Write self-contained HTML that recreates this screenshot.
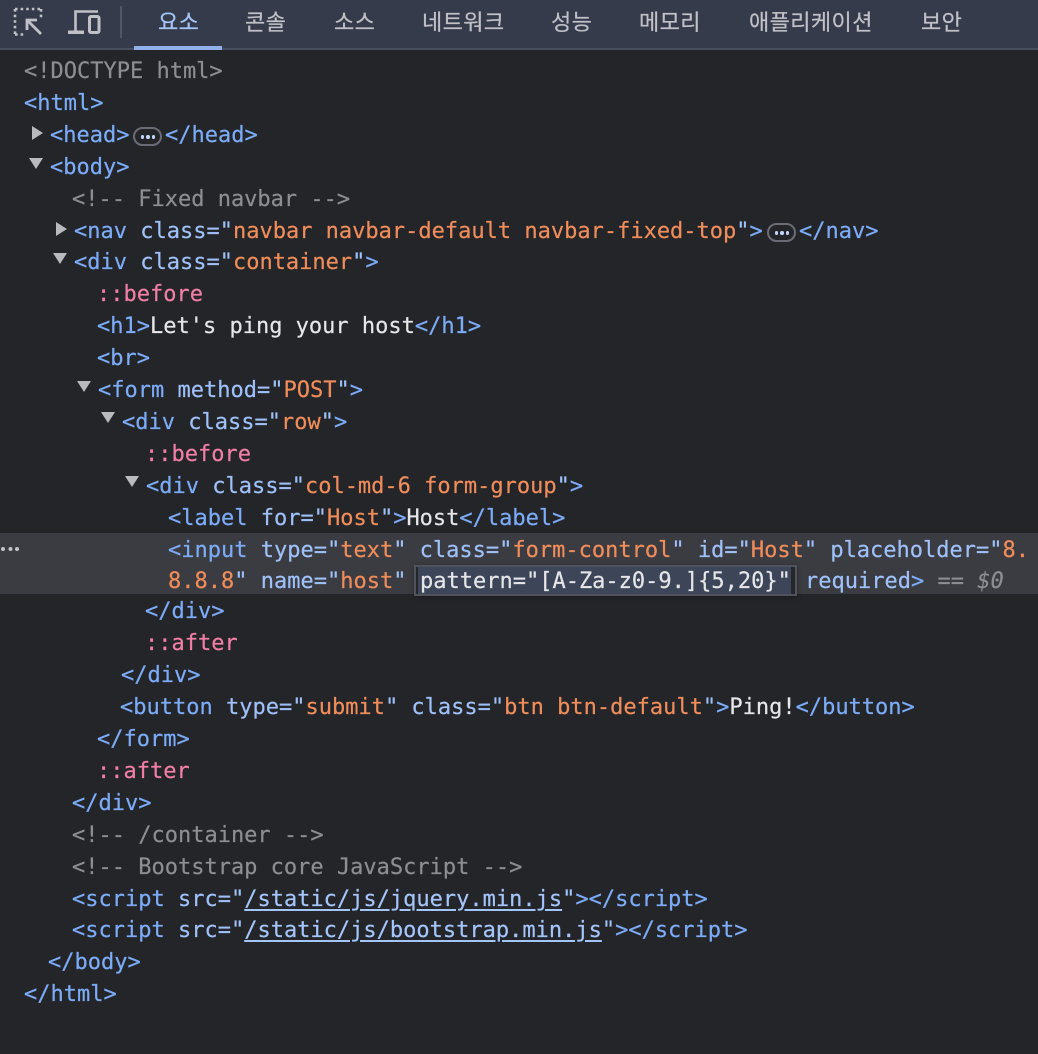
<!DOCTYPE html>
<html><head><meta charset="utf-8">
<style>
html,body{margin:0;padding:0;background:#242529;width:1038px;height:1054px;overflow:hidden}
#p{position:relative;width:1038px;height:1054px;overflow:hidden;font-family:"DejaVu Sans Mono","Liberation Mono",monospace;font-size:22px;-webkit-text-stroke:0.2px}
.l{position:absolute;white-space:pre;line-height:32px;height:32px;margin-top:2px;color:#e3e3e6}
.t{color:#7cacf8}.a{color:#9fc1f9}.v{color:#f08d5a}.c{color:#8d8e91}.p{color:#f27fa5}.w{color:#e6e6e9}
.u{color:#a4c5fa;text-decoration:underline;text-underline-offset:3px}
.tab{position:absolute;top:8px;line-height:30px;font-family:"Liberation Sans","Noto Sans CJK KR",sans-serif;font-size:22px;letter-spacing:.4px;color:#c0c1c6;white-space:pre}
.b{position:absolute;width:25px;height:15px;border:2px solid #6a6d75;border-radius:10px}
.b i{position:absolute;top:6px;width:3.5px;height:3.5px;border-radius:50%;background:#c3d6f8}
.tr{position:absolute;width:0;height:0}
.r{border-top:7.5px solid transparent;border-bottom:7.5px solid transparent;border-left:11px solid #b9babd}
.d{border-left:7.5px solid transparent;border-right:7.5px solid transparent;border-top:11px solid #b9babd}
</style></head><body>
<div id="p">
<div style="position:absolute;left:0;top:0;width:1038px;height:48px;background:#353b4b"></div>
<div style="position:absolute;left:0;top:48px;width:1038px;height:2px;background:#4a4f60"></div>
<div style="position:absolute;left:134px;top:46px;width:88px;height:4px;background:#8fb0ea"></div>
<svg style="position:absolute;left:0;top:0" width="130" height="48" fill="none">
<path d="M15 9h27M15 9v26M41 9v11M15 34.500h11" stroke="#c0c1c6" stroke-width="2.600" stroke-dasharray="2.600 3"/>
<path d="M41 34 L28 21 M27 30 V20 H37" stroke="#c0c1c6" stroke-width="2.800"/>
<path d="M75.500 31V11.500H98" stroke="#c0c1c6" stroke-width="2.600"/>
<path d="M68 30.500H84V34H68Z" fill="#c0c1c6"/>
<rect x="89.500" y="16.500" width="9.500" height="16" rx="1.500" stroke="#c0c1c6" stroke-width="3"/>
<rect x="120" y="6" width="2" height="32" fill="#51566a"/>
</svg>
<div class="tab" style="left:158px;color:#a6c6fa">요소</div>
<div class="tab" style="left:245px">콘솔</div>
<div class="tab" style="left:334px">소스</div>
<div class="tab" style="left:422px">네트워크</div>
<div class="tab" style="left:551px">성능</div>
<div class="tab" style="left:639px">메모리</div>
<div class="tab" style="left:749px">애플리케이션</div>
<div class="tab" style="left:921px">보안</div>

<div style="position:absolute;left:0;top:533px;width:1038px;height:61px;background:#3b3c41"></div>
<div style="position:absolute;left:414px;top:565px;width:383px;height:31px;background:#3c4658;box-sizing:border-box;border:2px solid #50535b;box-shadow:0 1px 5px rgba(0,0,0,.3)"></div>
<div style="position:absolute;left:416px;top:567px;width:2px;height:27px;background:#25262a"></div>
<div style="position:absolute;left:791px;top:567px;width:4px;height:27px;background:#25262a"></div>
<svg style="position:absolute;left:0;top:544px" width="22" height="10"><circle cx="3" cy="5" r="2" fill="#c3c4c7"/><circle cx="10.500" cy="5" r="2" fill="#c3c4c7"/><circle cx="17" cy="5" r="2" fill="#c3c4c7"/></svg>

<div class="tr r" style="left:32px;top:126px"></div>
<div class="tr d" style="left:29px;top:158px"></div>
<div class="tr r" style="left:56px;top:222px"></div>
<div class="tr d" style="left:53px;top:253px"></div>
<div class="tr d" style="left:77px;top:381px"></div>
<div class="tr d" style="left:101px;top:412px"></div>
<div class="tr d" style="left:125px;top:476px"></div>
<div class="b" style="left:133px;top:127px"><i style="left:5.500px"></i><i style="left:11px"></i><i style="left:16.500px"></i></div>
<div class="b" style="left:767px;top:223px"><i style="left:5.500px"></i><i style="left:11px"></i><i style="left:16.500px"></i></div>

<div class="l c" style="left:24px;top:54px">&lt;!DOCTYPE html&gt;</div>
<div class="l t" style="left:24px;top:86px">&lt;html&gt;</div>
<div class="l t" style="left:50px;top:118px">&lt;head&gt;</div>
<div class="l t" style="left:165px;top:118px">&lt;/head&gt;</div>
<div class="l t" style="left:50px;top:150px">&lt;body&gt;</div>
<div class="l c" style="left:72px;top:182px">&lt;!-- Fixed navbar --&gt;</div>
<div class="l t" style="left:74px;top:214px">&lt;nav <span class="a">class=</span><span class="a">"</span><span class="v">navbar navbar-default navbar-fixed-top</span><span class="a">"</span>&gt;</div>
<div class="l t" style="left:799px;top:214px">&lt;/nav&gt;</div>
<div class="l t" style="left:74px;top:245px">&lt;div <span class="a">class="</span><span class="v">container</span><span class="a">"</span>&gt;</div>
<div class="l p" style="left:97px;top:277px">::before</div>
<div class="l t" style="left:97px;top:309px">&lt;h1&gt;<span class="w">Let's ping your host</span>&lt;/h1&gt;</div>
<div class="l t" style="left:97px;top:341px">&lt;br&gt;</div>
<div class="l t" style="left:98px;top:373px">&lt;form <span class="a">method="</span><span class="v">POST</span><span class="a">"</span>&gt;</div>
<div class="l t" style="left:122px;top:405px">&lt;div <span class="a">class="</span><span class="v">row</span><span class="a">"</span>&gt;</div>
<div class="l p" style="left:145px;top:437px">::before</div>
<div class="l t" style="left:146px;top:469px">&lt;div <span class="a">class="</span><span class="v">col-md-6 form-group</span><span class="a">"</span>&gt;</div>
<div class="l t" style="left:168px;top:501px">&lt;label <span class="a">for="</span><span class="v">Host</span><span class="a">"</span>&gt;<span class="w">Host</span>&lt;/label&gt;</div>
<div class="l t" style="left:168px;top:533px">&lt;input <span class="a">type="</span><span class="v">text</span><span class="a">" class="</span><span class="v">form-control</span><span class="a">" id="</span><span class="v">Host</span><span class="a">" placeholder="</span><span class="v">8.</span></div>
<div class="l a" style="left:168px;top:564px"><span class="v">8.8.8</span>" name="<span class="v">host</span>"</div>
<div class="l w" style="left:420px;top:564px">pattern="[A-Za-z0-9.]{5,20}"</div>
<div class="l a" style="left:805px;top:564px">required<span class="t">&gt;</span> <span class="c">== <i>$0</i></span></div>
<div class="l t" style="left:145px;top:594px">&lt;/div&gt;</div>
<div class="l p" style="left:145px;top:626px">::after</div>
<div class="l t" style="left:121px;top:658px">&lt;/div&gt;</div>
<div class="l t" style="left:120px;top:690px">&lt;button <span class="a">type="</span><span class="v">submit</span><span class="a">" class="</span><span class="v">btn btn-default</span><span class="a">"</span>&gt;<span class="w">Ping!</span>&lt;/button&gt;</div>
<div class="l t" style="left:97px;top:722px">&lt;/form&gt;</div>
<div class="l p" style="left:97px;top:754px">::after</div>
<div class="l t" style="left:72px;top:786px">&lt;/div&gt;</div>
<div class="l c" style="left:72px;top:818px">&lt;!-- /container --&gt;</div>
<div class="l c" style="left:72px;top:850px">&lt;!-- Bootstrap core JavaScript --&gt;</div>
<div class="l t" style="left:72px;top:882px">&lt;script <span class="a">src="</span><span class="u">/static/js/jquery.min.js</span><span class="a">"</span>&gt;&lt;/script&gt;</div>
<div class="l t" style="left:72px;top:913px">&lt;script <span class="a">src="</span><span class="u">/static/js/bootstrap.min.js</span><span class="a">"</span>&gt;&lt;/script&gt;</div>
<div class="l t" style="left:48px;top:945px">&lt;/body&gt;</div>
<div class="l t" style="left:24px;top:977px">&lt;/html&gt;</div>
</div>
</body></html>
